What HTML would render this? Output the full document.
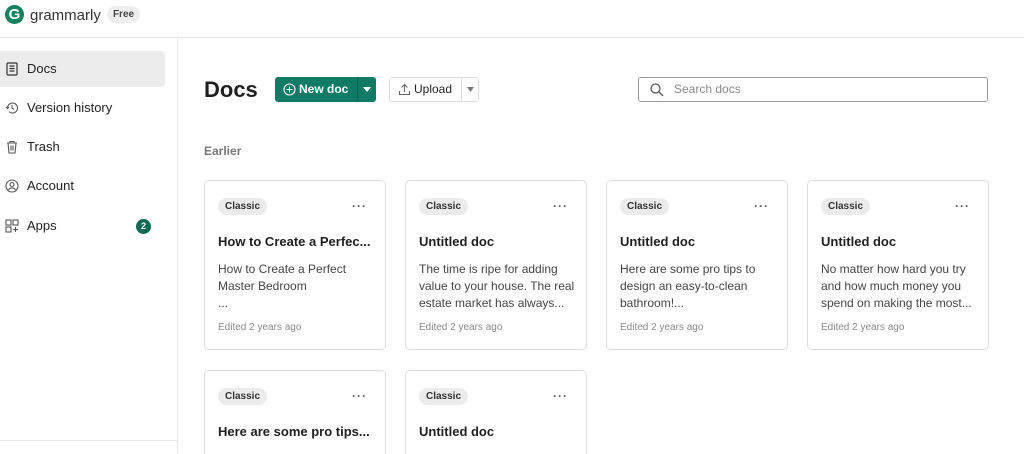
<!DOCTYPE html>
<html style="width:1024px;height:454px;overflow:hidden"><head><style>
*{box-sizing:border-box;margin:0;padding:0}
body{width:1024px;height:454px;overflow:hidden;background:#fff;font-family:"Liberation Sans",sans-serif;color:#1f1f1f;position:relative}
.hdr{position:absolute;left:0;top:0;width:1024px;height:38px;border-bottom:1px solid #e6e6e6}
.logo{position:absolute;left:5px;top:5px;width:19px;height:19px;border-radius:50%;background:#11815f;color:#fff;font-weight:bold;font-size:15px;text-align:center;line-height:19px}
.brand{position:absolute;left:30px;top:7px;font-size:15px;color:#333}
.free{position:absolute;left:107px;top:6px;width:33px;height:17px;border-radius:9px;background:#eee;font-size:10px;font-weight:bold;text-align:center;line-height:17px;color:#444}
.side{position:absolute;left:0;top:38px;width:178px;height:416px;border-right:1px solid #e6e6e6}
.side .bot{position:absolute;left:0;top:402px;width:177px;border-top:1px solid #e6e6e6}
.nav{position:absolute;left:0;width:165px;height:36px;font-size:13px;line-height:36px;padding-left:27px;color:#222}
.nav.act{background:#ececec;border-radius:0 4px 4px 0}
.nav svg{position:absolute;left:5px;top:11px}
.badge{position:absolute;right:14px;top:11px;width:15px;height:15px;border-radius:50%;background:#0d6b56;color:#fff;font-size:9px;font-weight:bold;line-height:15px;text-align:center;padding:0}
h1{position:absolute;left:204px;top:77px;font-size:22px;font-weight:bold}
.nd{position:absolute;left:275px;top:77px;width:101px;height:25px;background:#0f7a65;border-radius:3px;color:#fff;font-size:12px;font-weight:bold;line-height:25px}
.nd span{position:absolute;left:24px}
.nd .sep{position:absolute;left:82px;top:0;height:25px;border-left:1px solid #0a5e4d}
.up{position:absolute;left:389px;top:77px;width:90px;height:25px;border:1px solid #ddd;border-radius:3px;font-size:12px;line-height:23px}
.up span{position:absolute;left:24px}
.up .sep{position:absolute;left:71px;top:0;height:23px;border-left:1px solid #ddd}
.srch{position:absolute;left:638px;top:77px;width:350px;height:25px;border:1px solid #999;border-radius:3px;font-size:12px;color:#888;line-height:23px;padding-left:35px}
.earl{position:absolute;left:204px;top:144px;font-size:12px;font-weight:bold;color:#777}
.card{position:absolute;width:182px;height:170px;border:1px solid #dcdcdc;border-radius:5px}
.card.s{height:84px;border-bottom:none;border-radius:5px 5px 0 0}
.tag{position:absolute;left:13px;top:17px;height:17px;padding:0 7px;border-radius:9px;background:#ebebeb;font-size:10px;font-weight:bold;line-height:17px;color:#333}
.dots{position:absolute;right:18px;top:18px;font-size:12px;letter-spacing:1px;color:#555;font-weight:bold}
.t{position:absolute;left:13px;top:53px;font-size:13px;font-weight:bold;white-space:nowrap}
.d{position:absolute;left:13px;top:80px;width:160px;font-size:12px;line-height:17px;color:#444}
.e{position:absolute;left:13px;top:141px;font-size:10px;color:#888}
</style></head><body>
<div class="hdr"><div class="logo">G</div><div class="brand">grammarly</div><div class="free">Free</div></div>
<div class="side">
<div class="nav act" style="top:13px"><svg width="14" height="14" viewBox="0 0 14 14" fill="none" stroke="#333" stroke-width="1.2"><rect x="2" y="1" width="10" height="12" rx="1"/><path d="M4.5 4h5M4.5 6.5h5M4.5 9h5"/></svg>Docs</div>
<div class="nav" style="top:52px"><svg width="14" height="14" viewBox="0 0 14 14" fill="none" stroke="#555" stroke-width="1.1"><path d="M2.5 7a5 5 0 1 1 1.5 3.6M7 4v3l2 1.5M1 6l1.5 1.5L4 6"/></svg>Version history</div>
<div class="nav" style="top:91px"><svg width="14" height="14" viewBox="0 0 14 14" fill="none" stroke="#555" stroke-width="1.1"><path d="M2 3h10M5 3V1.5h4V3M3 3l1 10h6l1-10M6 5.5v5M8 5.5v5"/></svg>Trash</div>
<div class="nav" style="top:130px"><svg width="14" height="14" viewBox="0 0 14 14" fill="none" stroke="#555" stroke-width="1.1"><circle cx="7" cy="7" r="6"/><circle cx="7" cy="5.5" r="2"/><path d="M3.5 11a4 4 0 0 1 7 0"/></svg>Account</div>
<div class="nav" style="top:170px"><svg width="14" height="14" viewBox="0 0 14 14" fill="none" stroke="#555" stroke-width="1.1"><rect x="1" y="1" width="5" height="5"/><rect x="8" y="1" width="5" height="5"/><rect x="1" y="8" width="5" height="5"/><path d="M10.5 8v5M8 10.5h5"/></svg>Apps<span class="badge">2</span></div>
<div class="bot"></div>
</div>
<h1>Docs</h1>
<div class="nd"><svg style="position:absolute;left:8px;top:6px" width="13" height="13" viewBox="0 0 13 13" fill="none" stroke="#fff" stroke-width="1.1"><circle cx="6.5" cy="6.5" r="5.5"/><path d="M6.5 3.5v6M3.5 6.5h6"/></svg><span>New doc</span><div class="sep"></div><svg style="position:absolute;left:88px;top:10px" width="8" height="5"><path d="M0 0h8L4 5z" fill="#fff"/></svg></div>
<div class="up"><svg style="position:absolute;left:8px;top:5px" width="13" height="13" viewBox="0 0 13 13" fill="none" stroke="#666" stroke-width="1.1"><path d="M6.5 9V1.5M3.5 4.5l3-3 3 3M1.5 8v3.5h10V8"/></svg><span>Upload</span><div class="sep"></div><svg style="position:absolute;left:77px;top:9px" width="7" height="5"><path d="M0 0h7L3.5 5z" fill="#777"/></svg></div>
<div class="srch"><svg style="position:absolute;left:11px;top:5px" width="14" height="14" viewBox="0 0 14 14" fill="none" stroke="#555" stroke-width="1.3"><circle cx="5.5" cy="5.5" r="4.5"/><path d="M9 9l4 4"/></svg>Search docs</div>
<div class="earl">Earlier</div>
<div class="card" style="left:204px;top:180px"><div class="tag">Classic</div><div class="dots">···</div><div class="t">How to Create a Perfec...</div><div class="d">How to Create a Perfect Master Bedroom<br>...</div><div class="e">Edited 2 years ago</div></div>
<div class="card" style="left:405px;top:180px"><div class="tag">Classic</div><div class="dots">···</div><div class="t">Untitled doc</div><div class="d">The time is ripe for adding value to your house. The real estate market has always...</div><div class="e">Edited 2 years ago</div></div>
<div class="card" style="left:606px;top:180px"><div class="tag">Classic</div><div class="dots">···</div><div class="t">Untitled doc</div><div class="d">Here are some pro tips to design an easy-to-clean bathroom!...</div><div class="e">Edited 2 years ago</div></div>
<div class="card" style="left:807px;top:180px"><div class="tag">Classic</div><div class="dots">···</div><div class="t">Untitled doc</div><div class="d">No matter how hard you try and how much money you spend on making the most...</div><div class="e">Edited 2 years ago</div></div>
<div class="card s" style="left:204px;top:370px"><div class="tag">Classic</div><div class="dots">···</div><div class="t">Here are some pro tips...</div></div>
<div class="card s" style="left:405px;top:370px"><div class="tag">Classic</div><div class="dots">···</div><div class="t">Untitled doc</div></div>
</body></html>
